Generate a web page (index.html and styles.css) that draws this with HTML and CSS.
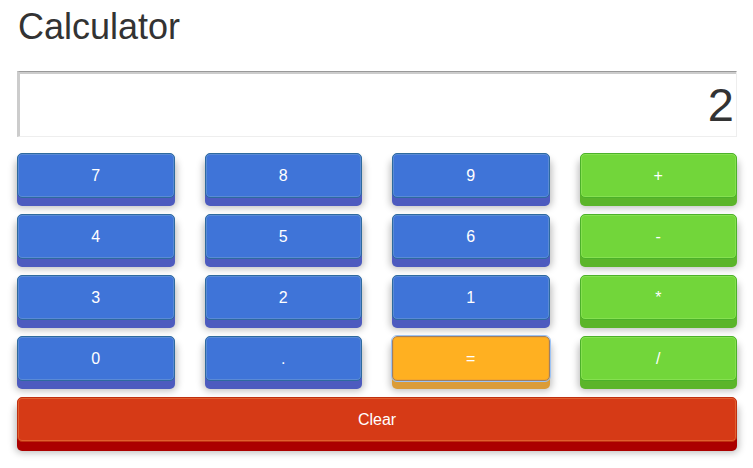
FILE: index.html
```html
<!DOCTYPE html>
<html>
<head>
<meta charset="utf-8">
<link rel="stylesheet" href="styles.css">
</head>
<body>
<div class="calc">
  <h1 class="title">Calculator</h1>
  <div class="display">2</div>
  <div class="keys">
    <button class="key num">7</button>
    <button class="key num">8</button>
    <button class="key num">9</button>
    <button class="key op">+</button>
    <button class="key num">4</button>
    <button class="key num">5</button>
    <button class="key num">6</button>
    <button class="key op">-</button>
    <button class="key num">3</button>
    <button class="key num">2</button>
    <button class="key num">1</button>
    <button class="key op">*</button>
    <button class="key num">0</button>
    <button class="key num">.</button>
    <button class="key eq">=</button>
    <button class="key op">/</button>
    <button class="key clear">Clear</button>
  </div>
</div>
</body>
</html>
```
FILE: styles.css
```css
html, body {
  margin: 0;
  padding: 0;
  background: #fff;
}
body {
  font-family: "Liberation Sans", Arial, sans-serif;
  color: #333;
  min-height: 468px;
}
.calc {
  width: 720px;
  padding: 0 16px 24px 17px;
}
.title {
  margin: 0;
  padding-top: 7px;
  font-size: 36px;
  font-weight: normal;
  line-height: 40px;
  color: #333;
  padding-left: 1px;
}
.display {
  margin-top: 24px;
  box-sizing: border-box;
  height: 66px;
  border-style: solid;
  border-width: 1px 1px 1px 3px;
  border-color: #999 #eee #eee #ccc;
  box-shadow: inset 0 2px 0 #ccc;
  text-align: right;
  font-size: 47px;
  line-height: 66px;
  padding-right: 2px;
  color: #333;
}
.keys {
  margin-top: 16px;
  display: grid;
  grid-template-columns: repeat(4, 1fr);
  column-gap: 30px;
  row-gap: 16px;
}
.key {
  height: 45px;
  border-radius: 5px;
  border: 1px solid;
  font-family: "Liberation Sans", Arial, sans-serif;
  font-size: 16px;
  color: #fff;
  padding: 0;
  cursor: pointer;
}
.num {
  background: #3f74d8;
  border-color: #2e6a9e;
  box-shadow: inset 0 0 0 1px #5a8ad6, 0 8px 0 #4d5bbf, 0 8px 7px 2px rgba(0,0,0,0.25);
}
.op {
  background: #72d63a;
  border-color: #4cb12a;
  box-shadow: inset 0 0 0 1px #86e050, 0 8px 0 #5bb52a, 0 8px 7px 2px rgba(0,0,0,0.25);
}
.eq {
  background: #ffb021;
  border-color: #a08060;
  outline: 1px solid #9cc3f5;
  box-shadow: inset 0 0 0 1px #f5a62a, 0 8px 0 #db9c38, 0 8px 7px 2px rgba(0,0,0,0.25);
}
.clear {
  grid-column: 1 / -1;
  background: #d63a16;
  border-color: #c03010;
  box-shadow: inset 0 0 0 1px #e06030, 0 9px 0 #ab0000, 0 9px 7px 2px rgba(0,0,0,0.25);
}
```
